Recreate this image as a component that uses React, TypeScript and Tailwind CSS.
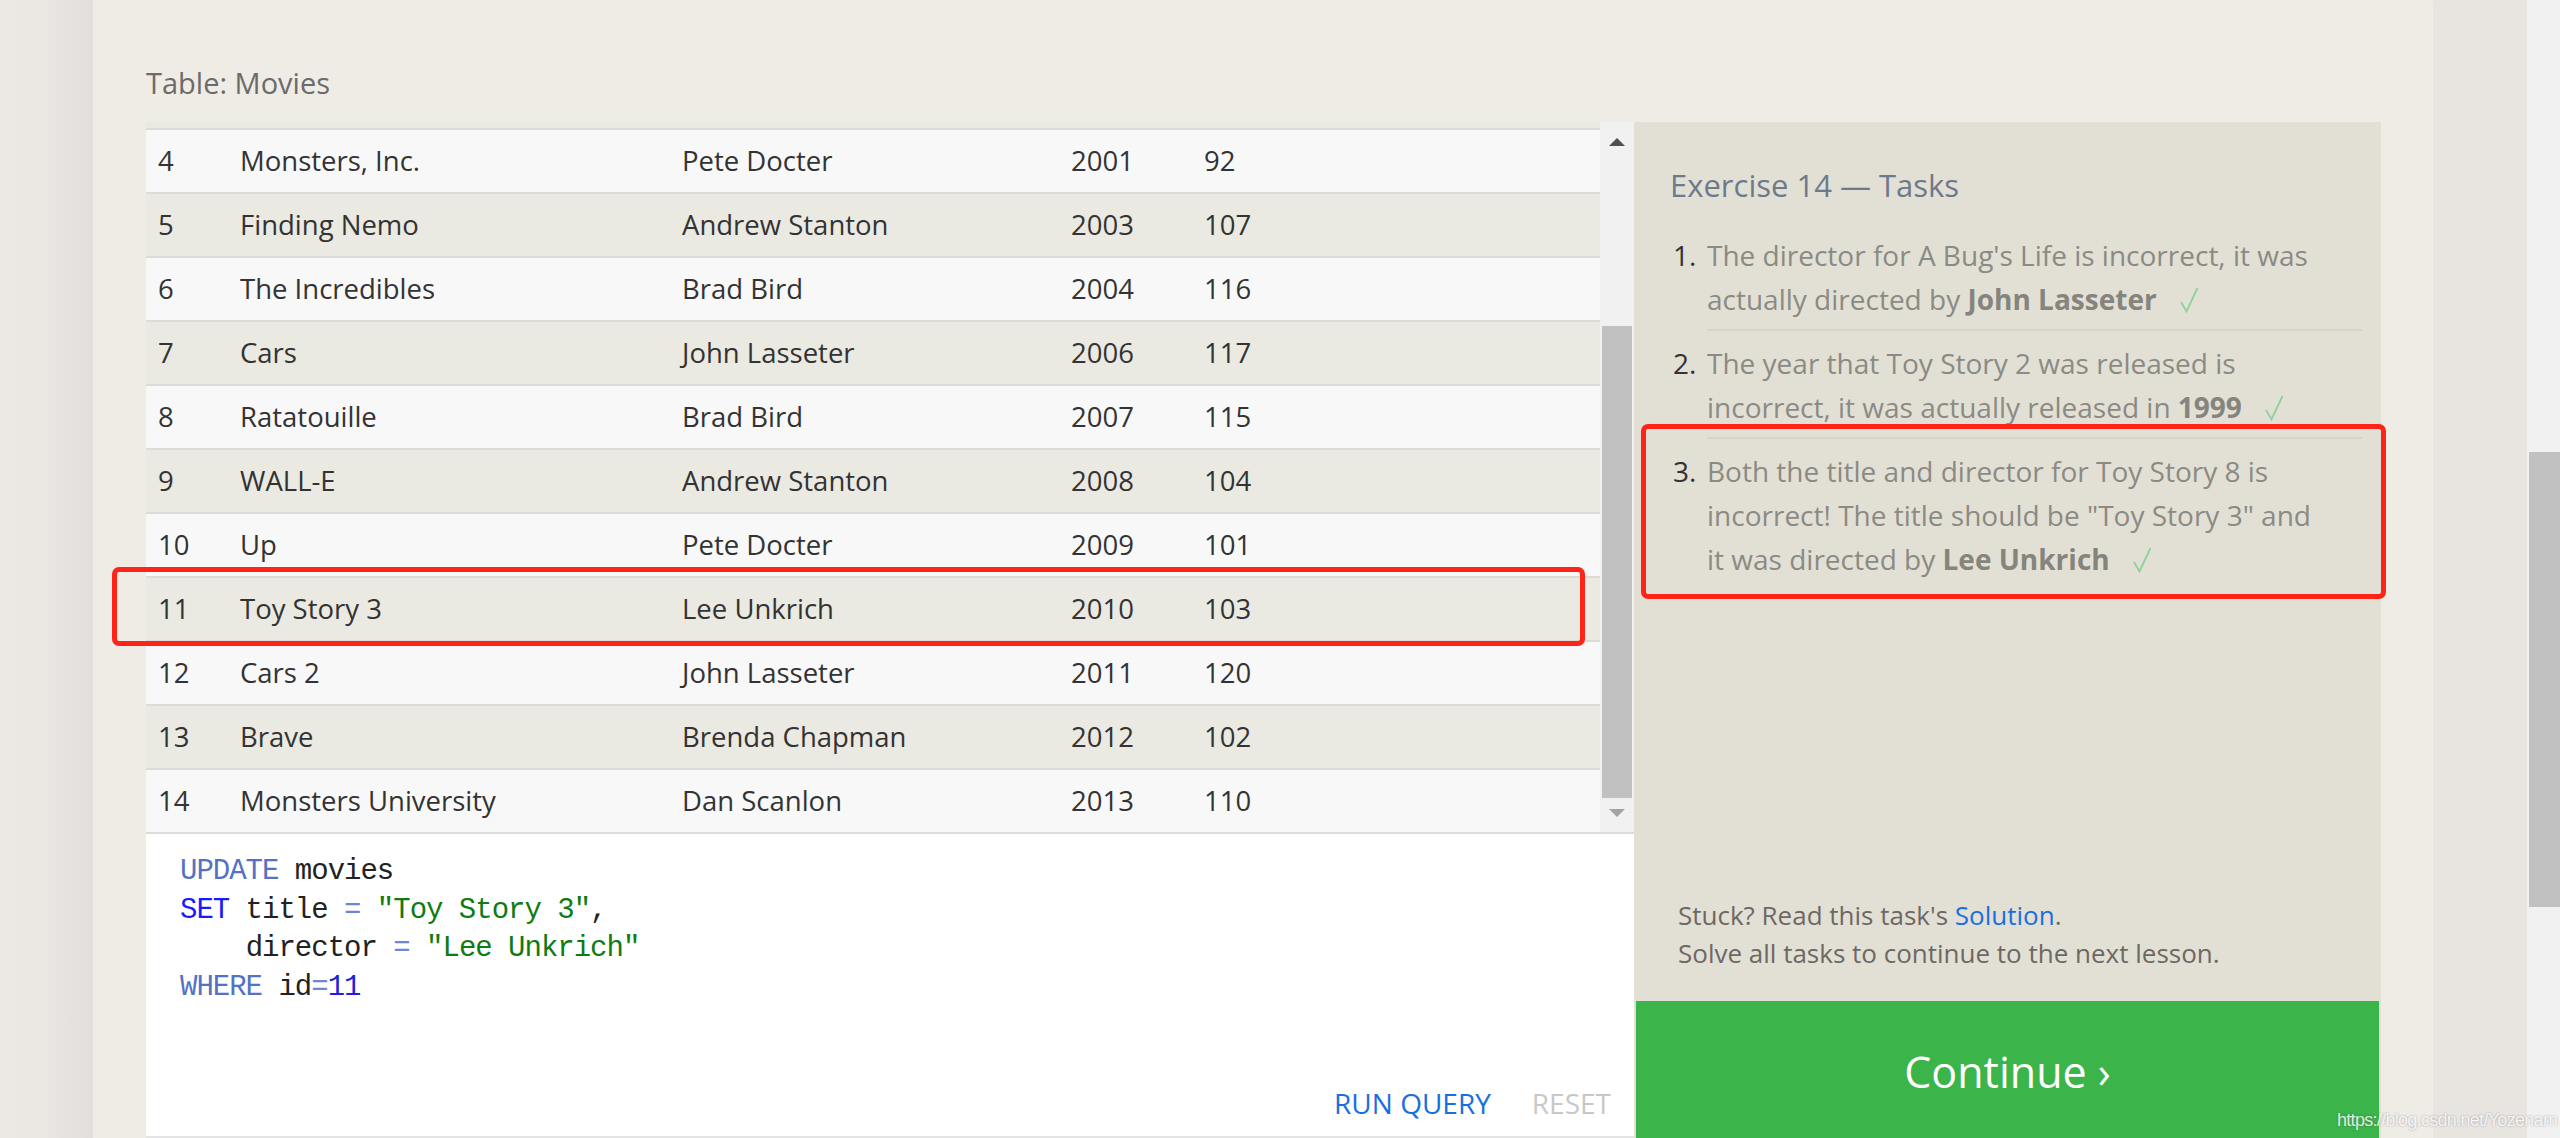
import React from 'react';

type Movie = {
  id: number;
  title: string;
  director: string;
  year: number;
  length: number;
};

const movies: Movie[] = [
  { id: 4, title: 'Monsters, Inc.', director: 'Pete Docter', year: 2001, length: 92 },
  { id: 5, title: 'Finding Nemo', director: 'Andrew Stanton', year: 2003, length: 107 },
  { id: 6, title: 'The Incredibles', director: 'Brad Bird', year: 2004, length: 116 },
  { id: 7, title: 'Cars', director: 'John Lasseter', year: 2006, length: 117 },
  { id: 8, title: 'Ratatouille', director: 'Brad Bird', year: 2007, length: 115 },
  { id: 9, title: 'WALL-E', director: 'Andrew Stanton', year: 2008, length: 104 },
  { id: 10, title: 'Up', director: 'Pete Docter', year: 2009, length: 101 },
  { id: 11, title: 'Toy Story 3', director: 'Lee Unkrich', year: 2010, length: 103 },
  { id: 12, title: 'Cars 2', director: 'John Lasseter', year: 2011, length: 120 },
  { id: 13, title: 'Brave', director: 'Brenda Chapman', year: 2012, length: 102 },
  { id: 14, title: 'Monsters University', director: 'Dan Scanlon', year: 2013, length: 110 },
];

const sans = { fontFamily: '"Open Sans", "Noto Sans", sans-serif' };
const mono = { fontFamily: '"Liberation Mono", "Courier New", monospace' };

function Check() {
  return (
    <svg className="inline-block ml-[22px] align-[-3px]" width="20" height="26" viewBox="0 0 20 26">
      <polyline points="2,15 7.5,24.5 18.5,1" fill="none" stroke="#8ed299" strokeWidth="1.8" />
    </svg>
  );
}

// Table of movies with a fake scrollbar on the right
function MovieTable() {
  return (
    <div className="flex h-[710px]">
      <div className="w-[1454px] flex flex-col text-[27.5px] text-[#333]">
        {/* bottom of row 3, scrolled out of view */}
        <div className="h-[6px] bg-[#eae9e2]" />
        {movies.map((m, i) => (
          <div
            key={m.id}
            className={
              'flex items-center h-[64px] border-t-2 border-[#dcdbd5] pl-[12px] ' +
              (i % 2 === 0 ? 'bg-[#f8f8f8]' : 'bg-[#eae9e2]')
            }
          >
            <span className="w-[82px]">{m.id}</span>
            <span className="w-[442px]">{m.title}</span>
            <span className="w-[389px]">{m.director}</span>
            <span className="w-[133px]">{m.year}</span>
            <span>{m.length}</span>
          </div>
        ))}
      </div>
      <div className="w-[34px] bg-[#f1f1f1] flex flex-col">
        <div className="h-[40px] flex items-center justify-center">
          <div className="w-0 h-0 border-l-[8px] border-r-[8px] border-b-[8px] border-l-transparent border-r-transparent border-b-[#505050]" />
        </div>
        <div className="mt-[164px] h-[472px] mx-[2px] bg-[#c1c1c1]" />
        <div className="flex-1 flex items-center justify-center pb-[4px]">
          <div className="w-0 h-0 border-l-[8px] border-r-[8px] border-t-[8px] border-l-transparent border-r-transparent border-t-[#a3a3a3]" />
        </div>
      </div>
    </div>
  );
}

function Editor() {
  return (
    <div className="h-[306px] bg-white border-t-2 border-[#dcdbd5] border-b-2 border-b-[#e4e4e4] flex flex-col">
      <pre className="pl-[34px] pt-[19px] text-[29px] leading-[38.5px] tracking-[-1px] text-[#222]" style={mono}>
        <span className="text-[#5472c4]">UPDATE</span> movies{'\n'}
        <span className="text-[#1a1aff]">SET</span> title <span className="text-[#6f86d8]">=</span>{' '}
        <span className="text-[#117a11]">"Toy Story 3"</span>,{'\n'}
        {'    '}director <span className="text-[#6f86d8]">=</span>{' '}
        <span className="text-[#117a11]">"Lee Unkrich"</span>{'\n'}
        <span className="text-[#5472c4]">WHERE</span> id<span className="text-[#6f86d8]">=</span>
        <span className="text-[#1f1fe0]">11</span>
      </pre>
      <div className="mt-[76px] flex justify-end gap-[41px] pr-[23px] text-[28px] leading-[40px]">
        <span className="text-[#1a6fe0]">RUN QUERY</span>
        <span className="text-[#c8c8c8]">RESET</span>
      </div>
    </div>
  );
}

function TaskPanel() {
  return (
    <div className="w-[747px] h-[1021px] bg-[#e2e0d5] flex flex-col">
      <h2 className="pl-[36px] pt-[43px] text-[31px] leading-[40px] text-[#6e7a8c]">Exercise 14 — Tasks</h2>
      <ol className="mt-[18px] pl-[39px] text-[28px] leading-[44px] text-[#8b8a84]">
        <li className="flex pt-[10px]">
          <span className="w-[34px] text-[#333]">1.</span>
          <div className="w-[655px] pb-[8px] border-b-2 border-[#d6d5cb] whitespace-nowrap">
            The director for A Bug's Life is incorrect, it was
            <br />
            actually directed by <b className="text-[#85847d]">John Lasseter</b>
            <Check />
          </div>
        </li>
        <li className="flex pt-[10px]">
          <span className="w-[34px] text-[#333]">2.</span>
          <div className="w-[655px] pb-[8px] border-b-2 border-[#d6d5cb] whitespace-nowrap">
            The year that Toy Story 2 was released is
            <br />
            incorrect, it was actually released in <b className="text-[#85847d]">1999</b>
            <Check />
          </div>
        </li>
        <li className="flex pt-[10px]">
          <span className="w-[34px] text-[#333]">3.</span>
          <div className="w-[655px] whitespace-nowrap">
            Both the title and director for Toy Story 8 is
            <br />
            incorrect! The title should be "Toy Story 3" and
            <br />
            it was directed by <b className="text-[#85847d]">Lee Unkrich</b>
            <Check />
          </div>
        </li>
      </ol>
      <div className="mt-auto pl-[44px] pb-[29px] text-[26px] leading-[38px] text-[#6e6864]">
        <p>
          Stuck? Read this task's <span className="text-[#1a6fe0]">Solution</span>.
        </p>
        <p>Solve all tasks to continue to the next lesson.</p>
      </div>
      <div className="h-[142px] mx-[2px] bg-[#3bb54a] flex items-center justify-center text-white text-[43px]">
        Continue ›
      </div>
    </div>
  );
}

export default function App() {
  return (
    <div className="relative w-[2560px] h-[1138px] overflow-hidden flex bg-[#ebe7e3]" style={sans}>
      <div className="w-[93px] bg-gradient-to-r from-[#ece8e4] via-[#eae6e2] to-[#e2dedb]" />

      <div className="w-[2340px] flex flex-col">
        <div className="h-[5px] bg-[#f5f4f0]" />
        <div className="flex-1 bg-[#efece5] rounded-t-[4px] pl-[53px] pr-[52px]">
          <div className="pt-[63px] mb-[19px] text-[29px] leading-[40px] text-[#6b6b6b]">Table: Movies</div>
          <div className="flex">
            <div className="w-[1488px] flex flex-col">
              <MovieTable />
              <Editor />
            </div>
            <TaskPanel />
          </div>
        </div>
      </div>

      <div className="w-[94px] bg-[#e8e4e0]" />
      <div className="w-[33px] bg-[#f1f1f1] pl-[2px]">
        <div className="mt-[452px] h-[455px] bg-[#c1c1c1]" />
      </div>

      {/* annotation boxes */}
      <div className="absolute left-[112px] top-[567px] w-[1473px] h-[79px] border-[5px] border-[#ff2418] rounded-[7px]" />
      <div className="absolute left-[1641px] top-[424px] w-[745px] h-[175px] border-[5px] border-[#ff2418] rounded-[7px]" />

      <div
        className="absolute left-[2337px] top-[1107px] text-[18px] tracking-[-0.7px] text-white/85 [text-shadow:0_0_2px_rgba(0,0,0,0.35)]"
        style={{ fontFamily: '"Liberation Sans", Arial, sans-serif' }}
      >
        https://blog.csdn.net/Yozenam
      </div>
    </div>
  );
}
